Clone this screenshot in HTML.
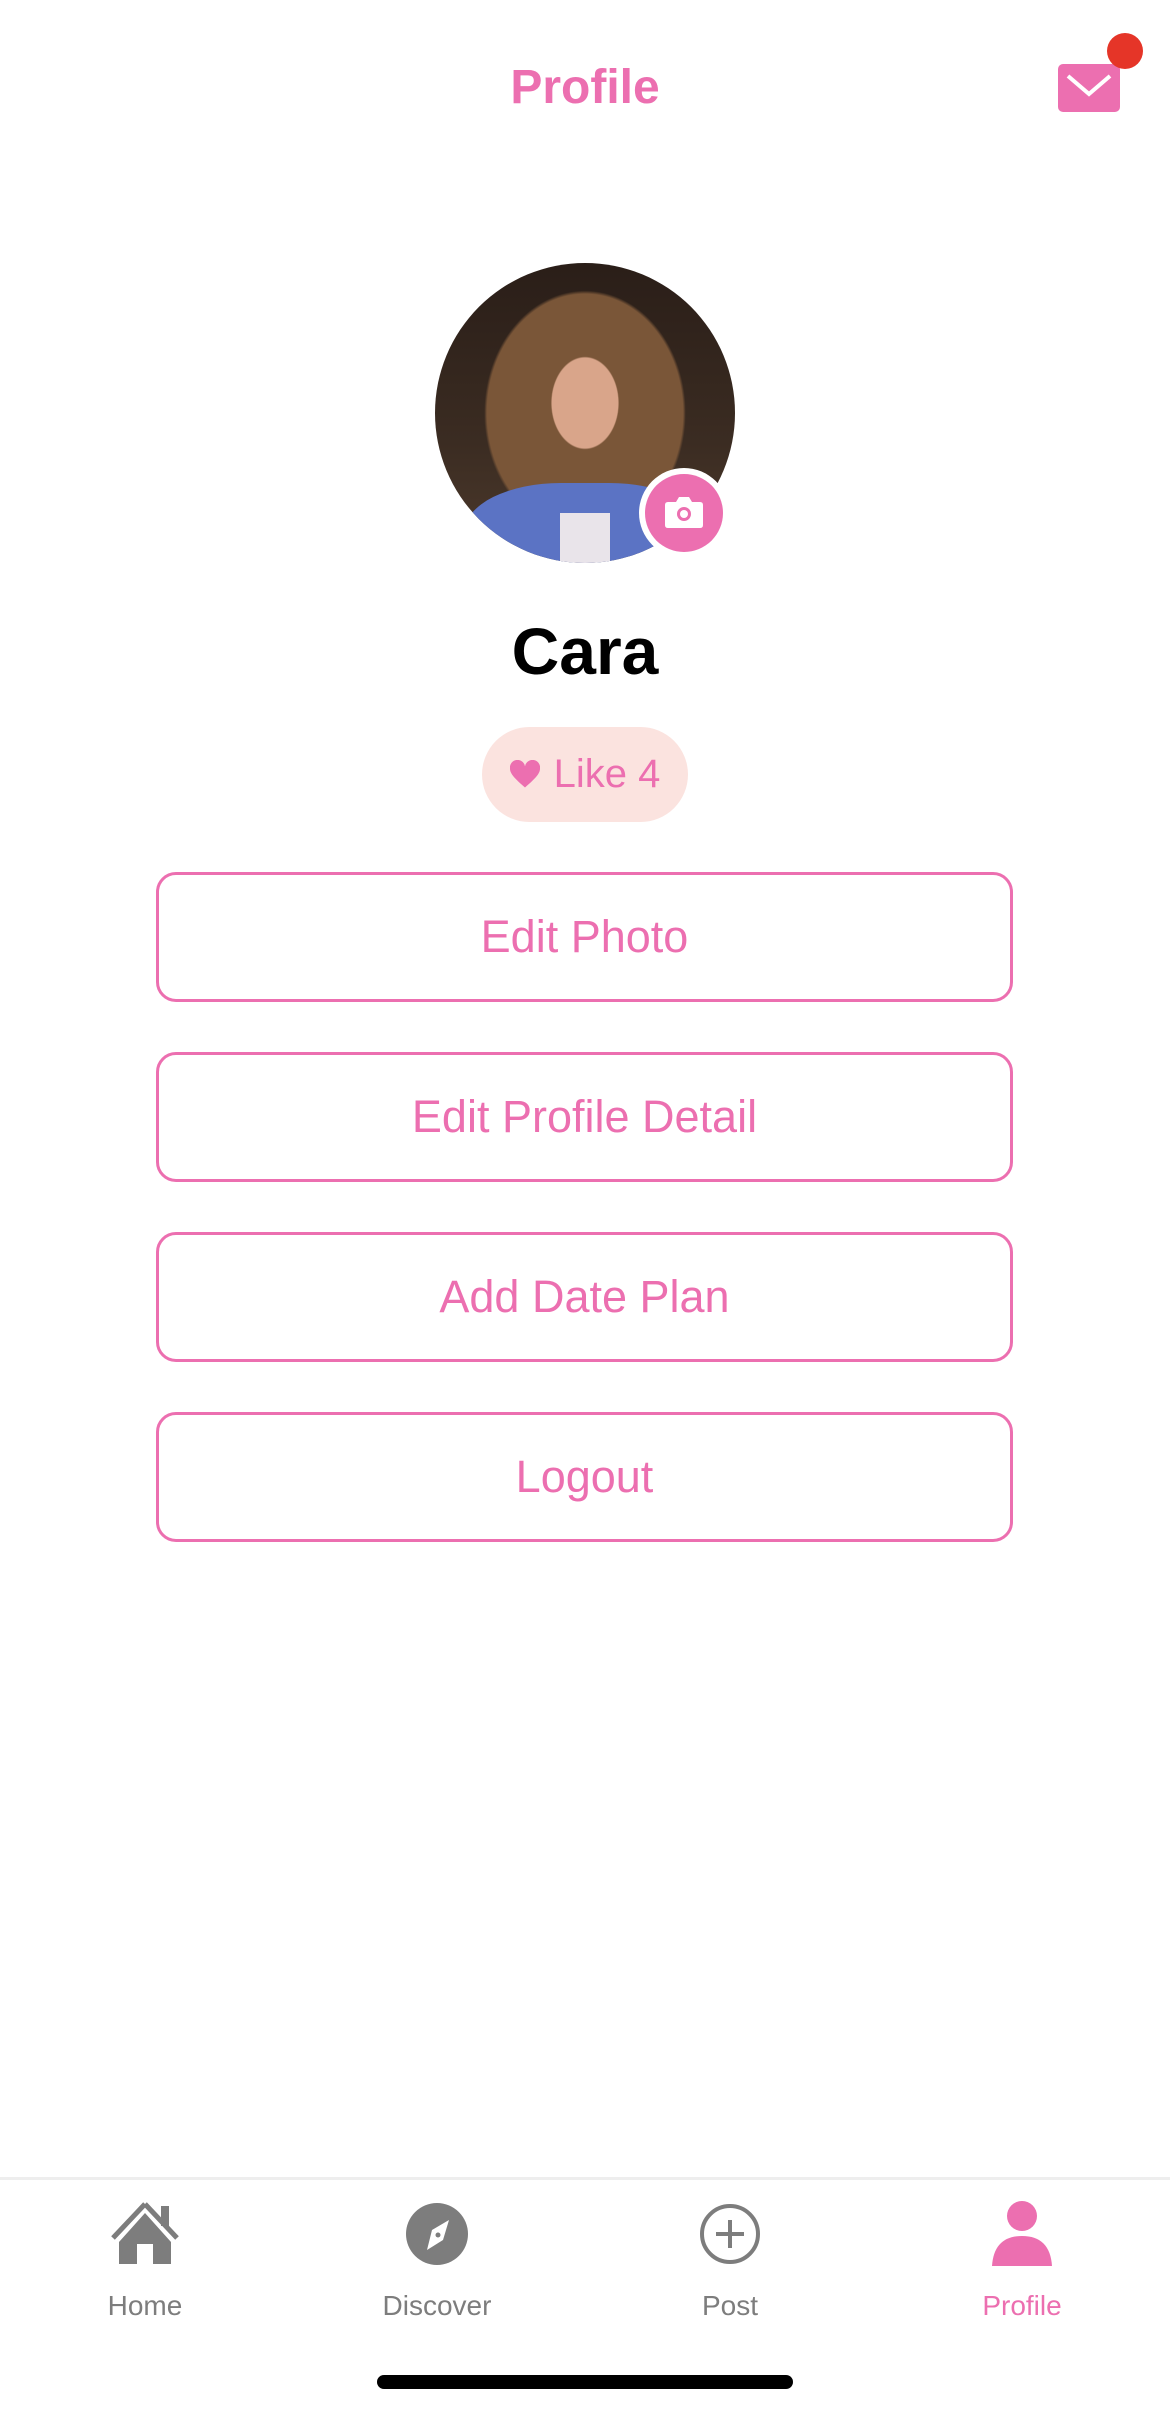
<!DOCTYPE html>
<html><head><meta charset="utf-8"><style>
body{margin:0;width:1170px;height:2413px;background:#fff;position:relative;overflow:hidden;font-family:"Liberation Sans",sans-serif}
.abs{position:absolute}
.btn{position:absolute;left:156px;width:851px;height:124px;border:3px solid #ec6fb0;border-radius:20px;color:#ec6fb0;font-size:45px;display:flex;align-items:center;justify-content:center}
.tab{position:absolute;top:2200px;width:200px;text-align:center;font-size:28px;color:#7d7d7d}
.tab svg{display:block;margin:0 auto}
</style></head><body>
<div class="abs" style="left:0;width:1170px;top:60px;text-align:center;font-size:48px;font-weight:bold;color:#ec6fb0">Profile</div>
<svg class="abs" style="left:1056px;top:62px" width="80" height="54" viewBox="0 0 80 54"><rect x="2" y="2" width="62" height="48" rx="5" fill="#ec6fb0"/><path d="M12 14 L33 32 L54 14" stroke="#fff" stroke-width="4" fill="none"/></svg>
<div class="abs" style="left:1107px;top:33px;width:36px;height:36px;border-radius:50%;background:#e53528"></div>
<div class="abs" style="left:435px;top:263px;width:300px;height:300px;border-radius:50%;overflow:hidden;background:radial-gradient(ellipse 55px 75px at 150px 140px,#d9a58a 60%,transparent 62%),radial-gradient(ellipse 140px 170px at 150px 150px,#7a5638 70%,transparent 72%),linear-gradient(180deg,#2a1e18 0%,#3b2c22 60%,#4d3a2c 100%)">
<div class="abs" style="left:30px;top:220px;width:240px;height:120px;background:#5b73c4;border-radius:40% 40% 0 0"></div>
<div class="abs" style="left:125px;top:250px;width:50px;height:60px;background:#e9e4ea"></div>
</div>
<div class="abs" style="left:639px;top:468px;width:90px;height:90px;border-radius:50%;background:#fff"></div>
<div class="abs" style="left:645px;top:474px;width:78px;height:78px;border-radius:50%;background:#ec6fb0"></div>
<svg class="abs" style="left:664px;top:494px" width="40" height="36" viewBox="0 0 40 36"><path d="M4 8 H12 L15 3 H25 L28 8 H36 Q39 8 39 11 V31 Q39 34 36 34 H4 Q1 34 1 31 V11 Q1 8 4 8Z" fill="#fff"/><circle cx="20" cy="20" r="7" fill="#ec6fb0"/><circle cx="20" cy="20" r="4" fill="#fff"/></svg>
<div class="abs" style="left:0;width:1170px;top:613px;text-align:center;font-size:66px;font-weight:bold;color:#000">Cara</div>
<div class="abs" style="left:482px;top:727px;width:206px;height:95px;border-radius:48px;background:#fbe3df;display:flex;align-items:center;justify-content:center;color:#ec6fb0;font-size:40px"><svg width="30" height="30" viewBox="0 0 24 22" style="margin-right:14px"><path d="M12 21 C4 14 0 10 0 6 A6 6 0 0 1 12 4 A6 6 0 0 1 24 6 C24 10 20 14 12 21Z" fill="#ec6fb0"/></svg>Like 4</div>
<div class="btn" style="top:872px">Edit Photo</div>
<div class="btn" style="top:1052px">Edit Profile Detail</div>
<div class="btn" style="top:1232px">Add Date Plan</div>
<div class="btn" style="top:1412px">Logout</div>
<div class="abs" style="left:0;top:2177px;width:1170px;height:3px;background:#eee"></div>
<div class="tab" style="left:45px"><svg width="72" height="66" viewBox="0 0 72 66"><path d="M36 4 L4 38" stroke="#7d7d7d" stroke-width="5" fill="none"/><path d="M36 4 L68 38" stroke="#7d7d7d" stroke-width="5" fill="none"/><rect x="52" y="6" width="8" height="20" fill="#7d7d7d"/><path d="M36 13 L10 42 V64 H28 V44 H44 V64 H62 V42Z" fill="#7d7d7d"/></svg><div style="margin-top:24px">Home</div></div>
<div class="tab" style="left:337px"><svg width="64" height="66" viewBox="0 0 64 66"><circle cx="32" cy="34" r="31" fill="#7d7d7d"/><path d="M44 20 L38 40 L22 50 L27 30Z" fill="#fff"/><circle cx="33" cy="35" r="2.5" fill="#7d7d7d"/></svg><div style="margin-top:24px">Discover</div></div>
<div class="tab" style="left:630px"><svg width="64" height="66" viewBox="0 0 64 66"><circle cx="32" cy="34" r="28" stroke="#7d7d7d" stroke-width="4" fill="none"/><path d="M32 20 V48 M18 34 H46" stroke="#7d7d7d" stroke-width="4"/></svg><div style="margin-top:24px">Post</div></div>
<div class="tab" style="left:922px;color:#ec6fb0"><svg width="64" height="66" viewBox="0 0 64 66"><ellipse cx="32" cy="16" rx="15" ry="15" fill="#ec6fb0"/><path d="M2 66 Q4 36 32 36 Q60 36 62 66Z" fill="#ec6fb0"/></svg><div style="margin-top:24px">Profile</div></div>
<div class="abs" style="left:377px;top:2375px;width:416px;height:14px;border-radius:7px;background:#000"></div>
</body></html>
